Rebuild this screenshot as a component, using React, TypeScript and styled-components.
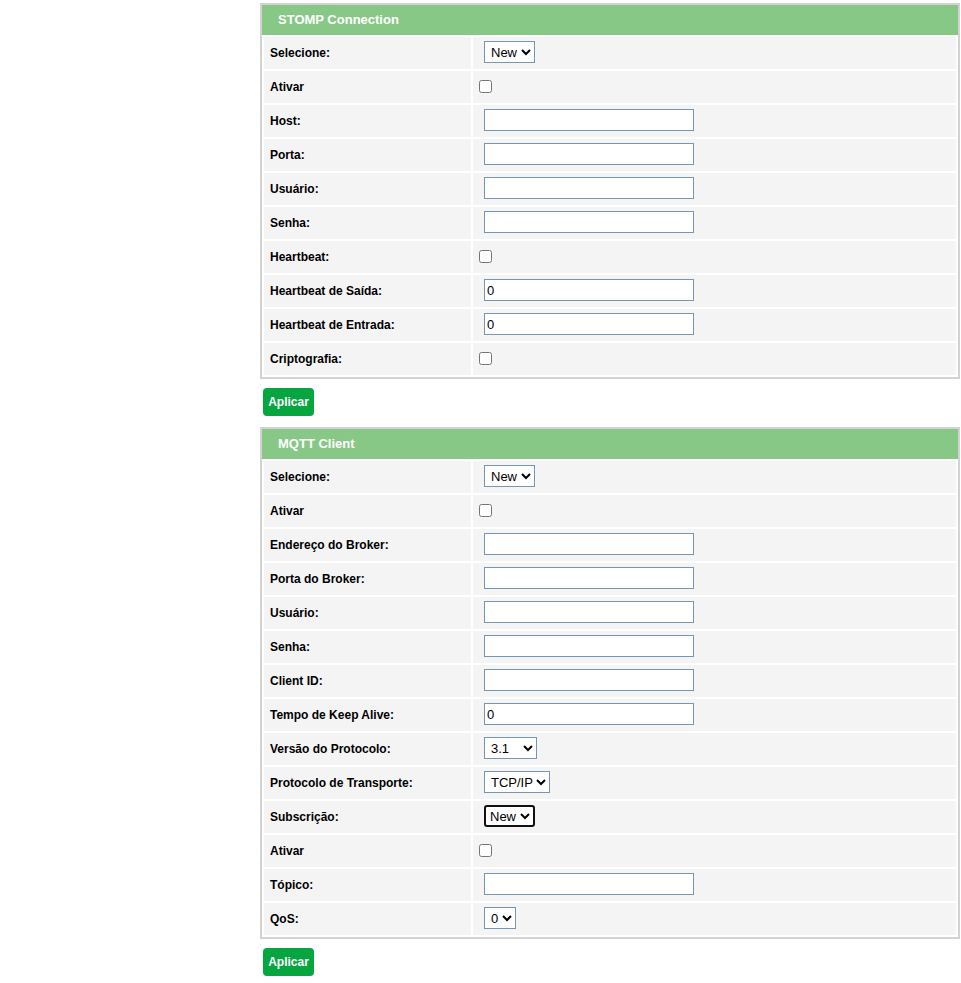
import styled, { createGlobalStyle } from "styled-components";

const GlobalStyle = createGlobalStyle`
  body {
    margin: 0;
    background: #ffffff;
    font-family: "Liberation Sans", Arial, sans-serif;
  }
`;

const Page = styled.div`
  padding: 3px 0 0 260px;
  display: flex;
  flex-direction: column;
  align-items: flex-start;
`;

const Panel = styled.div`
  width: 696px;
  border: 2px solid #d3d3d3;
  background: #ffffff;
`;

const PanelHeader = styled.div`
  height: 30px;
  box-sizing: border-box;
  background: #88c887;
  color: #ffffff;
  font-size: 13px;
  font-weight: bold;
  display: flex;
  align-items: center;
  padding: 0 0 2px 16px;
`;

const Rows = styled.div`
  display: grid;
  grid-template-columns: 207px 1fr;
  gap: 2px;
  padding: 2px;
`;

const LabelCell = styled.div`
  height: 32px;
  background: #f4f4f4;
  display: flex;
  align-items: center;
  padding-left: 6px;
  box-sizing: border-box;
  font-size: 12px;
  font-weight: bold;
  color: #000000;
`;

const ValueCell = styled.div`
  height: 32px;
  box-sizing: border-box;
  background: #f4f4f4;
  display: flex;
  align-items: center;
  padding: 0 0 2px 6px;
`;

const TextInput = styled.input`
  width: 210px;
  height: 22px;
  box-sizing: border-box;
  margin: 0 0 0 5px;
  padding: 1px 2px;
  border: 1px solid #7796b4;
  border-radius: 0;
  font-family: "Liberation Sans", Arial, sans-serif;
  font-size: 13px;
  color: #000000;
  outline: none;
`;

const Check = styled.input`
  width: 13px;
  height: 13px;
  margin: 0;
`;

const Select = styled.select<{ $focused?: boolean }>`
  height: 22px;
  box-sizing: border-box;
  margin: 0 0 0 5px;
  padding: 0;
  padding-left: ${(p) => (p.$focused ? "0" : "2px")};
  border: ${(p) => (p.$focused ? "2px solid #101010" : "1px solid #7796b4")};
  border-radius: ${(p) => (p.$focused ? "3px" : "0")};
  background: #ffffff;
  font-family: "Liberation Sans", Arial, sans-serif;
  font-size: 13px;
  color: #000000;
  outline: none;
`;

const ApplyButton = styled.button`
  margin: 9px 0 11px 3px;
  width: 51px;
  height: 28px;
  border: none;
  border-radius: 4px;
  background: #05a640;
  color: #ffffff;
  font-family: "Liberation Sans", Arial, sans-serif;
  font-size: 12px;
  font-weight: bold;
  padding: 0;
`;

type Field =
  | { label: string; kind: "text"; value?: string }
  | { label: string; kind: "check" }
  | { label: string; kind: "select"; options: string[]; focused?: boolean };

const stompFields: Field[] = [
  { label: "Selecione:", kind: "select", options: ["New"] },
  { label: "Ativar", kind: "check" },
  { label: "Host:", kind: "text" },
  { label: "Porta:", kind: "text" },
  { label: "Usuário:", kind: "text" },
  { label: "Senha:", kind: "text" },
  { label: "Heartbeat:", kind: "check" },
  { label: "Heartbeat de Saída:", kind: "text", value: "0" },
  { label: "Heartbeat de Entrada:", kind: "text", value: "0" },
  { label: "Criptografia:", kind: "check" },
];

const mqttFields: Field[] = [
  { label: "Selecione:", kind: "select", options: ["New"] },
  { label: "Ativar", kind: "check" },
  { label: "Endereço do Broker:", kind: "text" },
  { label: "Porta do Broker:", kind: "text" },
  { label: "Usuário:", kind: "text" },
  { label: "Senha:", kind: "text" },
  { label: "Client ID:", kind: "text" },
  { label: "Tempo de Keep Alive:", kind: "text", value: "0" },
  { label: "Versão do Protocolo:", kind: "select", options: ["3.1", "3.1.1"] },
  { label: "Protocolo de Transporte:", kind: "select", options: ["TCP/IP"] },
  { label: "Subscrição:", kind: "select", options: ["New"], focused: true },
  { label: "Ativar", kind: "check" },
  { label: "Tópico:", kind: "text" },
  { label: "QoS:", kind: "select", options: ["0", "1", "2"] },
];

const renderControl = (f: Field) => {
  if (f.kind === "text") return <TextInput type="text" defaultValue={f.value ?? ""} />;
  if (f.kind === "check") return <Check type="checkbox" />;
  return (
    <Select $focused={f.focused} defaultValue={f.options[0]}>
      {f.options.map((o) => (
        <option key={o}>{o}</option>
      ))}
    </Select>
  );
};

const ConfigPanel = ({ title, fields }: { title: string; fields: Field[] }) => (
  <>
    <Panel>
      <PanelHeader>{title}</PanelHeader>
      <Rows>
        {fields.map((f, i) => (
          <>
            <LabelCell key={"l" + i}>{f.label}</LabelCell>
            <ValueCell key={"v" + i}>{renderControl(f)}</ValueCell>
          </>
        ))}
      </Rows>
    </Panel>
    <ApplyButton>Aplicar</ApplyButton>
  </>
);

export default function App() {
  return (
    <>
      <GlobalStyle />
      <Page>
        <ConfigPanel title="STOMP Connection" fields={stompFields} />
        <ConfigPanel title="MQTT Client" fields={mqttFields} />
      </Page>
    </>
  );
}
